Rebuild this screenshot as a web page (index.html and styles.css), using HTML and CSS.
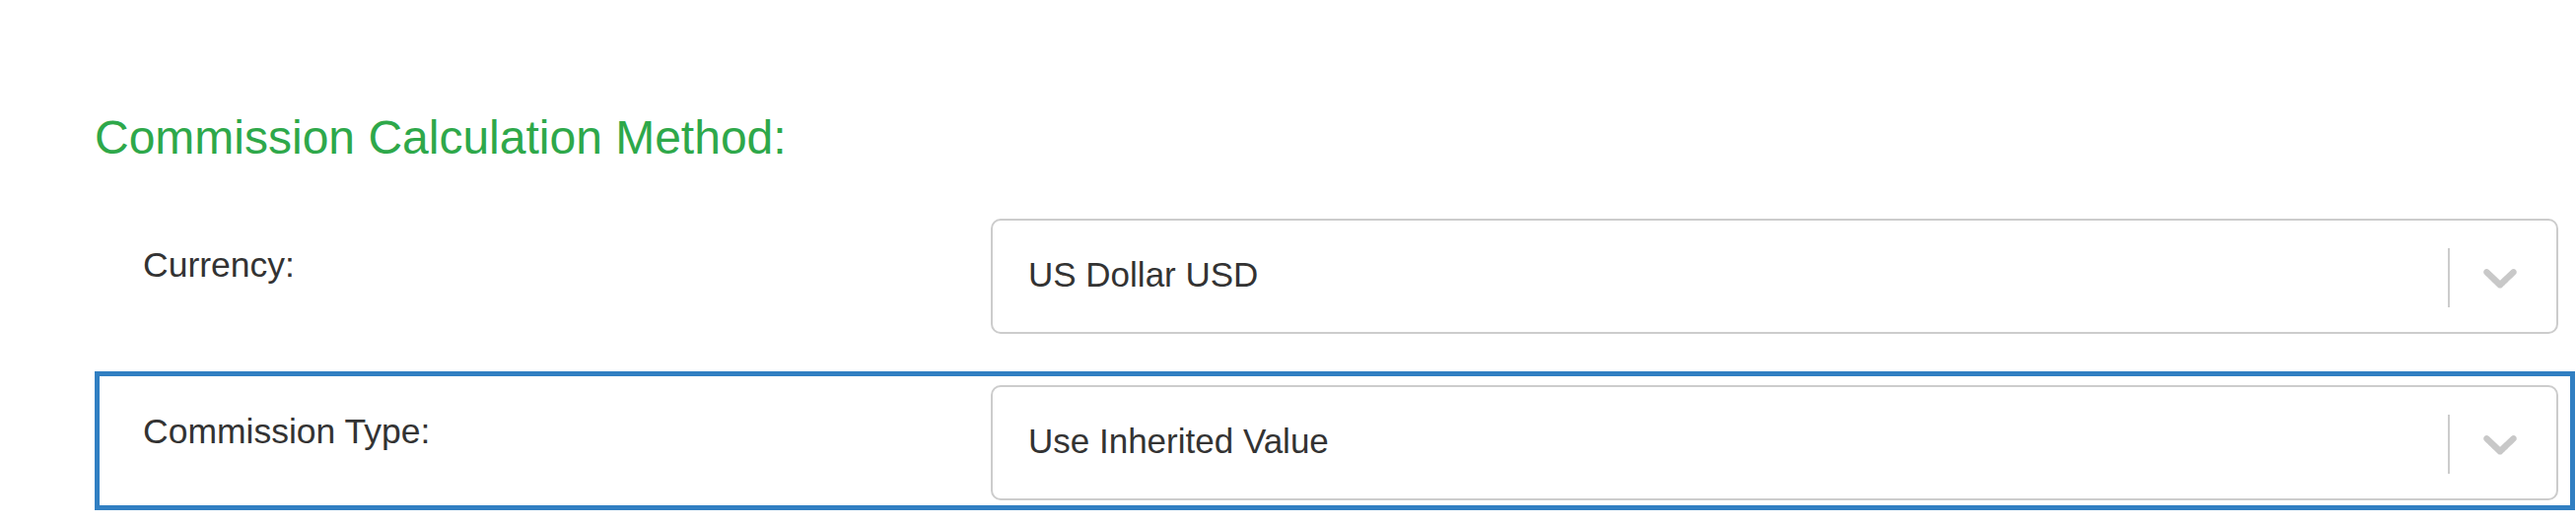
FILE: index.html
```html
<!DOCTYPE html>
<html lang="en">
<head>
<meta charset="utf-8">
<title>Commission Calculation Method</title>
<link rel="stylesheet" href="styles.css">
</head>
<body>
<div class="page">
  <h4 class="section-title">Commission Calculation Method:</h4>
  <div class="form-row">
    <label class="form-label">Currency:</label>
    <div class="select">
      <div class="select-value">US Dollar USD</div>
      <div class="select-indicators">
        <span class="select-separator"></span>
        <span class="select-arrow">
          <svg viewBox="0 0 20 20" width="58" height="58" aria-hidden="true"><path d="M4.516 7.548c0.436-0.446 1.043-0.481 1.576 0l3.908 3.747 3.908-3.747c0.533-0.481 1.141-0.446 1.574 0 0.436 0.445 0.408 1.197 0 1.615-0.406 0.418-4.695 4.502-4.695 4.502-0.217 0.223-0.502 0.335-0.787 0.335s-0.57-0.112-0.789-0.335c0 0-4.287-4.084-4.695-4.502s-0.436-1.17 0-1.615z"/></svg>
        </span>
      </div>
    </div>
  </div>
  <div class="form-row is-highlighted">
    <label class="form-label">Commission Type:</label>
    <div class="select">
      <div class="select-value">Use Inherited Value</div>
      <div class="select-indicators">
        <span class="select-separator"></span>
        <span class="select-arrow">
          <svg viewBox="0 0 20 20" width="58" height="58" aria-hidden="true"><path d="M4.516 7.548c0.436-0.446 1.043-0.481 1.576 0l3.908 3.747 3.908-3.747c0.533-0.481 1.141-0.446 1.574 0 0.436 0.445 0.408 1.197 0 1.615-0.406 0.418-4.695 4.502-4.695 4.502-0.217 0.223-0.502 0.335-0.787 0.335s-0.57-0.112-0.789-0.335c0 0-4.287-4.084-4.695-4.502s-0.436-1.17 0-1.615z"/></svg>
        </span>
      </div>
    </div>
  </div>
</div>
</body>
</html>
```

FILE: styles.css
```css
html, body {
  margin: 0;
  padding: 0;
  background: #ffffff;
}

body {
  font-family: "Liberation Sans", Arial, sans-serif;
  color: #333333;
  font-size: 35px;
  line-height: 50px;
}

.page {
  padding: 113px 1px 0 96px;
}

.section-title {
  margin: 0 0 42px 0;
  font-size: 48px;
  line-height: 53px;
  font-weight: normal;
  color: #2ea84a;
}

.form-row {
  display: flex;
  align-items: flex-start;
  border: 5px solid transparent;
  padding: 9px 12px 5px 44px;
  margin-bottom: 28px;
}

.form-row.is-highlighted {
  border-color: #317fc2;
}

.form-label {
  width: 860px;
  flex: none;
  padding-top: 22px;
  font-size: 35.5px;
  color: #333333;
}

.select {
  flex: 1;
  display: flex;
  align-items: center;
  height: 117px;
  box-sizing: border-box;
  border: 2.5px solid #cccccc;
  border-radius: 10px;
  background: #ffffff;
}

.select-value {
  flex: 1;
  padding: 0 0 3px 36px;
  color: #333333;
}

.select-indicators {
  display: flex;
  align-items: center;
  align-self: stretch;
}

.select-separator {
  width: 2.5px;
  height: 60px;
  background: #cccccc;
  margin-top: 2px;
}

.select-arrow {
  display: flex;
  align-items: center;
  padding: 0 28px 0 22px;
}

.select-arrow svg {
  fill: #c8c8c8;
  display: block;
}
```
